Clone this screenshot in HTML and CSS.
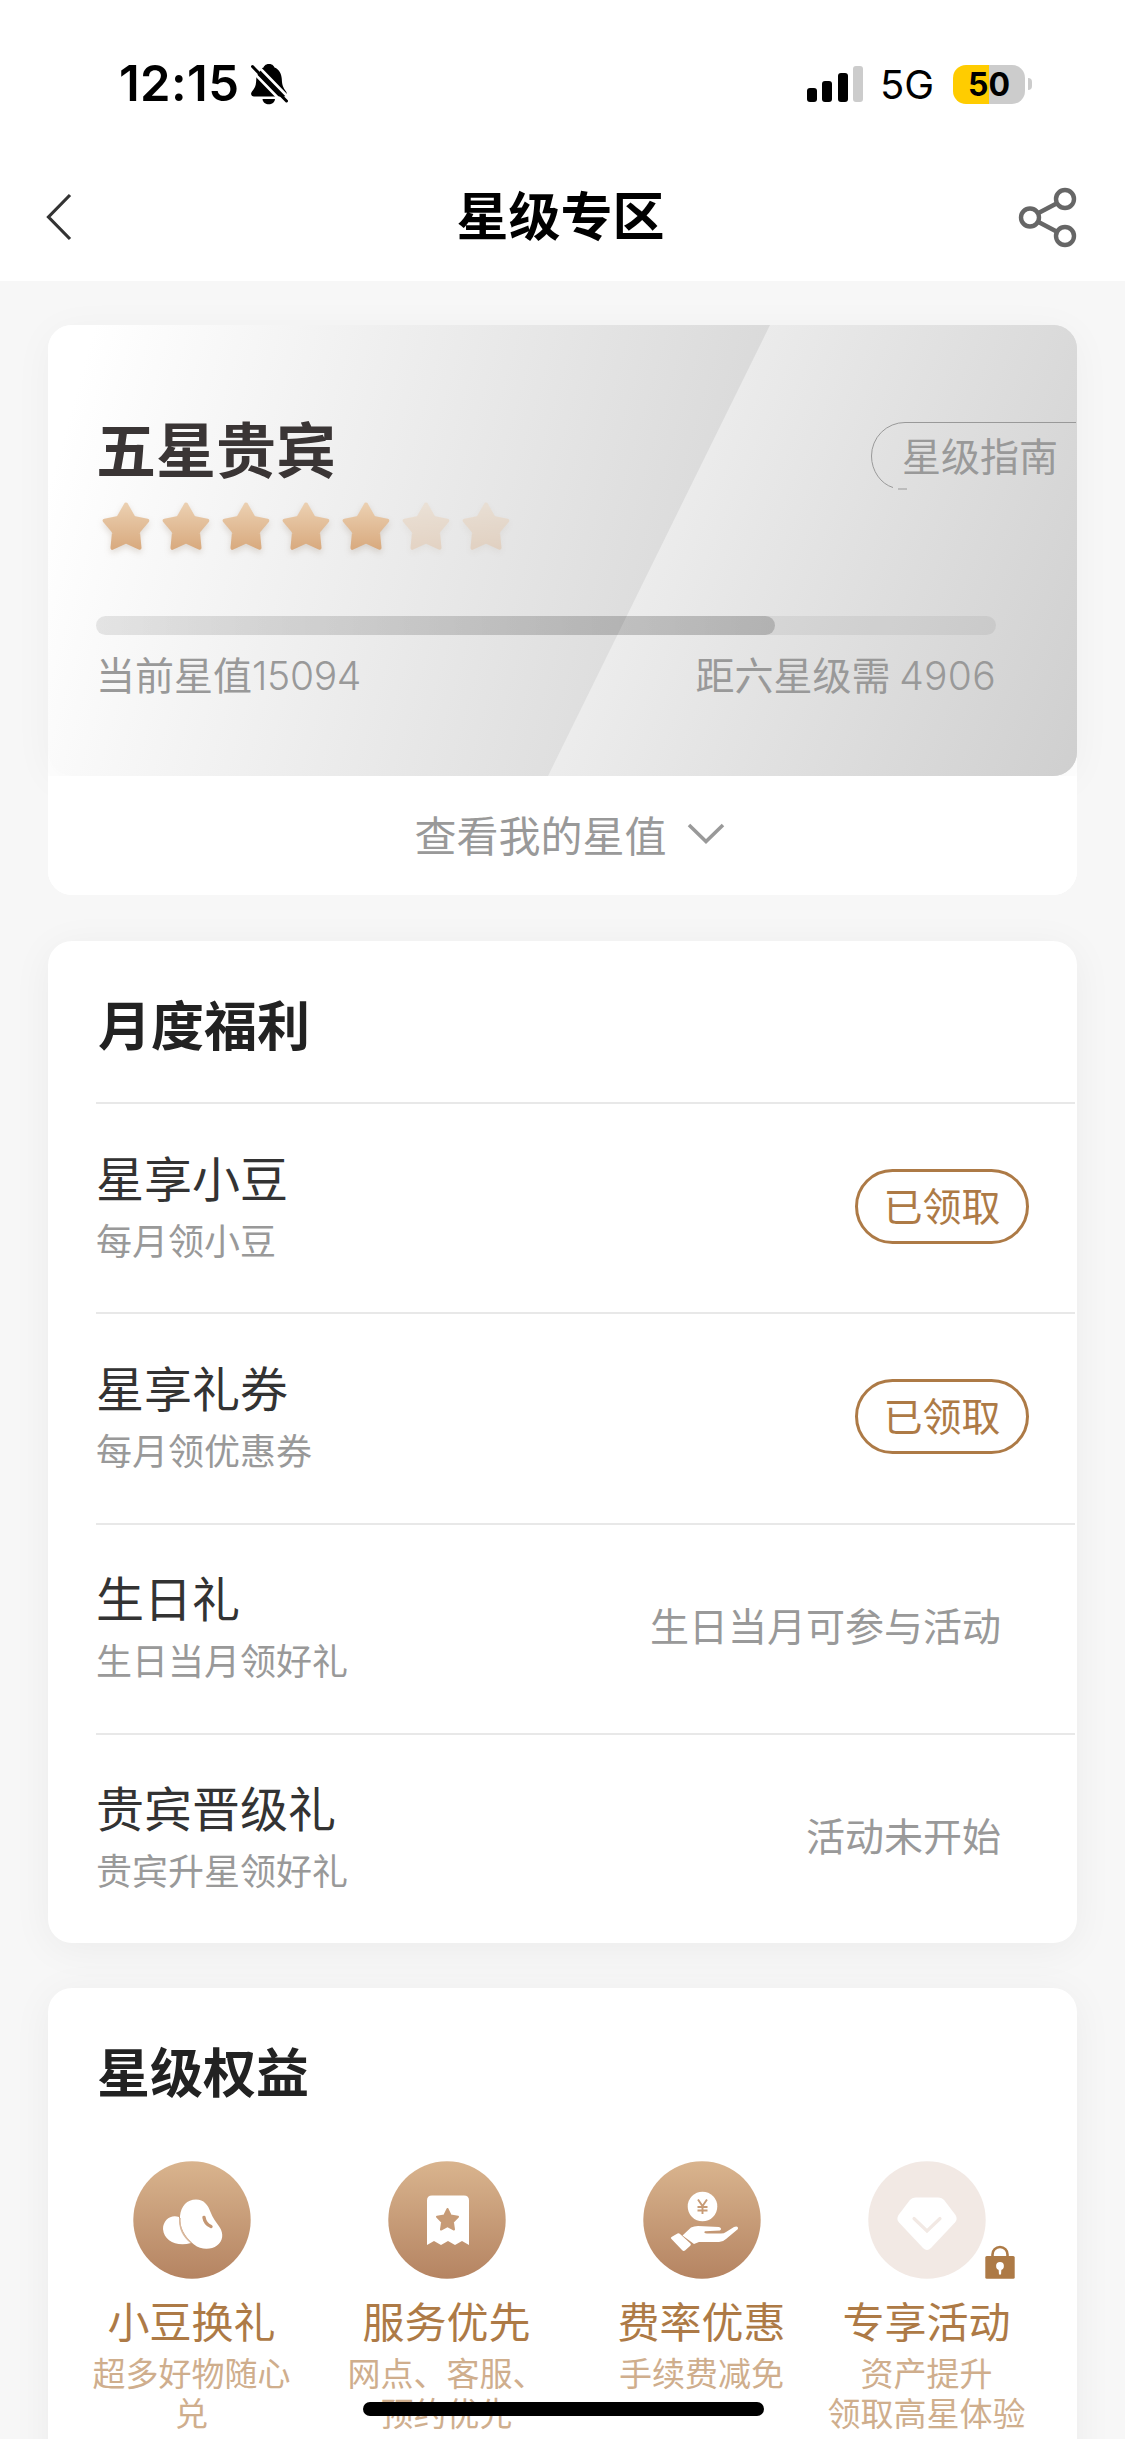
FILE: index.html
```html
<!DOCTYPE html>
<html lang="zh-CN">
<head>
<meta charset="utf-8">
<title>星级专区</title>
<link rel="stylesheet" href="styles.css">
</head>
<body>
<svg class="defs" width="0" height="0" aria-hidden="true">
  <defs>
    <linearGradient id="starFill" x1="0" y1="0" x2="0" y2="1">
      <stop offset="0" stop-color="#ebcfb0"/><stop offset="1" stop-color="#d9ab80"/>
    </linearGradient>
    <linearGradient id="discFill" x1="0" y1="0" x2="0" y2="1">
      <stop offset="0" stop-color="#d9b48e"/><stop offset="1" stop-color="#b58462"/>
    </linearGradient>
    <symbol id="star" viewBox="0 0 60 60">
      <path d="M30 8.5 36.8 20.5Q37.500 21.800 39 22.100L51.300 24.600 43 34.500Q42 35.700 42.100 37.200L43.500 51.800 31.500 46.200Q30 45.500 28.500 46.200L16.500 51.800 17.900 37.200Q18 35.700 17 34.500L8.700 24.600 21 22.100Q22.500 21.800 23.200 20.500Z" fill="url(#starFill)" stroke="url(#starFill)" stroke-width="4" stroke-linejoin="round"/>
    </symbol>
  </defs>
</svg>

<div class="screen">
  <div class="status">
    <div class="status-left">
      <span class="clock">12:15</span>
      <svg class="bell" width="38" height="42" viewBox="0 0 38 42">
        <path d="M19 1C23 1 24 3.500 24.500 4.500C29.500 6.500 31.500 11 31.800 16C32 22 33 24.500 36 28.500C38 31.500 36 33.500 34 33.500H4C1.500 33.500 0 31 2 28.500C5.500 24.500 6 22 6.300 16C6.500 11 8.500 6.500 13.500 4.500C14 3.500 15 1 19 1Z"/>
        <path d="M12.500 36H25C24.500 43 13 43 12.500 36Z"/>
        <path d="M-1 5 33 40M5 0 39 35" stroke="#fff" stroke-width="2.600" fill="none"/>
        <path d="M0 0H4L11 7 5 15 -1 9Z" fill="#fff"/>
        <path d="M2.500 3.500 36.500 38" stroke="#000" stroke-width="3" stroke-linecap="round"/>
      </svg>
    </div>
    <div class="status-right">
      <div class="signal"><i class="b1"></i><i class="b2"></i><i class="b3"></i><i class="b4"></i></div>
      <span class="net">5G</span>
      <div class="battery">50</div>
      <i class="battery-tip"></i>
    </div>
  </div>

  <header class="nav">
    <svg width="28" height="48" viewBox="0 0 28 48"><path d="M25 2 3.500 24 25 46" fill="none" stroke="#333" stroke-width="3.200"/></svg>
    <h1>星级专区</h1>
    <svg width="60" height="60" viewBox="0 0 60 60" fill="none" stroke="#666" stroke-width="4.400">
      <circle cx="13" cy="30.500" r="9"/><circle cx="48" cy="12" r="9"/><circle cx="48" cy="49" r="9"/>
      <path d="M21 26.300 40 16.200M21 34.700 40 44.800"/>
    </svg>
  </header>

  <main>
    <section class="card level">
      <div class="hero">
        <div class="hero-top">
          <div>
            <h2>五星贵宾</h2>
            <div class="stars">
              <svg><use href="#star"/></svg><svg><use href="#star"/></svg><svg><use href="#star"/></svg><svg><use href="#star"/></svg><svg><use href="#star"/></svg><svg class="off"><use href="#star"/></svg><svg class="off"><use href="#star"/></svg>
            </div>
          </div>
          <a class="guide">
            <svg width="205" height="68" viewBox="0 0 205 68" fill="none" stroke="#999"><path d="M205 .5H34A33.500 33.500 0 0 0 .5 34C.5 49 10 62 22 65.500M27 67H36"/></svg>
            <span>星级指南</span>
          </a>
        </div>
        <div class="bar"><div class="bar-fill" style="width:75.470%"></div></div>
        <div class="values"><span>当前星值<b>15094</b></span><span class="next">距六星级需 <b>4906</b></span></div>
      </div>
      <a class="more">查看我的星值
        <svg width="38" height="24" viewBox="0 0 38 24"><path d="M2 3 19 19.500 36 3" fill="none" stroke="#999" stroke-width="3.600"/></svg>
      </a>
    </section>

    <section class="card">
      <h3>月度福利</h3>
      <ul class="rows">
        <li><div><strong>星享小豆</strong><small>每月领小豆</small></div><span class="pill">已领取</span></li>
        <li><div><strong>星享礼券</strong><small>每月领优惠券</small></div><span class="pill">已领取</span></li>
        <li><div><strong>生日礼</strong><small>生日当月领好礼</small></div><em>生日当月可参与活动</em></li>
        <li><div><strong>贵宾晋级礼</strong><small>贵宾升星领好礼</small></div><em>活动未开始</em></li>
      </ul>
    </section>

    <section class="card rights">
      <h3>星级权益</h3>
      <div class="grid">
        <div class="item">
          <svg class="disc" viewBox="0 0 118 118"><circle cx="59" cy="59" r="58.700" fill="url(#discFill)"/>
            <path d="M46 56C38 53 30 59 30 68C31 80 44 86 58 82C50 75 46 66 46 56Z" fill="#fff"/>
            <path d="M63 38.500C71 38.500 75 44 77.500 51C79.500 57 83 60.500 86.500 66C91 73 90 80 84 84.500C78 89 68 89 61 83.500C52 76.500 46 66 47 55C48 45 54 38.500 63 38.500Z" fill="#fff"/>
            <path d="M47 57C46 67 51 76 58.500 82" fill="none" stroke="#d9b89d" stroke-width="1.500"/>
            <path d="M71 56.500Q72 63 78 65.500" fill="none" stroke="#c49672" stroke-width="3.400" stroke-linecap="round"/></svg>
          <p>小豆换礼</p><small>超多好物随心兑</small>
        </div>
        <div class="item">
          <svg class="disc" viewBox="0 0 118 118"><circle cx="59" cy="59" r="58.700" fill="url(#discFill)"/>
            <path d="M43 34.500H76Q81 34.500 81 39.500V84L74 80 67 84 60 80 53 84 46 80 39 84V39.500Q39 34.500 44 34.500Z" fill="#fff"/>
            <path d="M59.500 48 62.800 54.600 70 55.800 64.900 61 66 68.500 59.500 65.200 53 68.500 54.100 61 49 55.800 56.200 54.600Z" fill="#c79b76" stroke="#c79b76" stroke-width="2" stroke-linejoin="round"/></svg>
          <p>服务优先</p><small>网点、客服、<br>预约优先</small>
        </div>
        <div class="item">
          <svg class="disc" viewBox="0 0 118 118"><circle cx="59" cy="59" r="58.700" fill="url(#discFill)"/>
            <circle cx="59.500" cy="45.500" r="14.800" fill="#fff"/>
            <path d="M55 38.500 59.500 45 64 38.500M59.500 45V53M54.500 46H64.500M54.500 49.500H64.500" fill="none" stroke="#c79b76" stroke-width="1.900"/>
            <path d="M39.500 74.500 48 66.500Q51 65 55 65L76 66Q79.500 67.500 77 69.500L62 70.300Q60 72 64 72.500H78Q81 72.500 83 71L91 66Q95.500 64.500 95 68L83 78Q80 81 76 81H56L51 83Z" fill="#fff"/>
            <path d="M28.500 78Q27 77 28.500 76L34.500 72.500Q36 72 37 73L47.500 82.500Q48.500 84 47 85L42 89.500Q40.500 90.500 39 89Z" fill="#fff"/></svg>
          <p>费率优惠</p><small>手续费减免</small>
        </div>
        <div class="item">
          <svg class="disc" viewBox="0 0 118 118"><circle cx="59" cy="59" r="58.700" fill="#f2e9e4"/>
            <path d="M48 36.500H70Q74 36.500 76.500 39.500L87.500 54Q90 58 87 61.500L63 87Q59 91 55 87L31 61.500Q28 58 30.500 54L41.500 39.500Q44 36.500 48 36.500Z" fill="#fff"/>
            <path d="M46 57.500 59 70 72 57.500" fill="none" stroke="#f2e9e4" stroke-width="3.200" stroke-linecap="round"/></svg>
          <svg class="lock" viewBox="0 0 30 34"><path d="M7.500 12V9.500A7.500 7.500 0 0 1 22.500 9.500V12" fill="none" stroke="#ad7a46" stroke-width="2.600"/><rect x=".3" y="11" width="29.400" height="22.800" rx="1.500" fill="#ad7a46"/><circle cx="15" cy="21" r="3.900" fill="#fff"/><path d="M13.500 23H16.500L16 29.500H14Z" fill="#fff"/></svg>
          <p>专享活动</p><small>资产提升<br>领取高星体验</small>
        </div>
      </div>
    </section>
  </main>
  <div class="home-indicator"></div>
</div>
</body>
</html>
```
FILE: styles.css
```css
* { box-sizing: border-box; margin: 0; padding: 0; }

body {
  background: #f7f7f7;
  color: #333;
  font-family: "Noto Sans CJK SC", "Noto Sans", sans-serif;
}

svg { display: block; flex: none; overflow: visible; }
.defs { position: absolute; }
em, i { font-style: normal; }

.screen {
  position: relative;
  width: 1125px;
  height: 2439px;
  overflow: hidden;
}

/* Status bar */
.status {
  display: flex;
  justify-content: space-between;
  height: 168px;
  padding: 0 93px 0 119px;
  background: #fff;
  color: #000;
  font-family: Inter, sans-serif;
}
.status-left, .status-right { display: flex; align-items: center; height: 168px; }
.clock { width: 130px; font-size: 49px; font-weight: 600; letter-spacing: .4px; line-height: 60px; }
.bell { margin-left: 1px; }
.signal { display: flex; align-items: flex-end; gap: 5.500px; height: 36px; width: 56px; }
.signal i { width: 10px; border-radius: 3px; background: #000; }
.signal .b1 { height: 14px; }
.signal .b2 { height: 21px; }
.signal .b3 { height: 29px; }
.signal .b4 { height: 36px; background: #ccc; }
.net { width: 71px; margin-left: 17px; font-size: 40px; line-height: 60px; margin-top: 2px; }
.battery {
  width: 72px;
  height: 39px;
  margin-left: 2px;
  border-radius: 13px;
  background: linear-gradient(90deg, #fc0 50%, #ccc 50%);
  font-size: 32px;
  font-weight: 700;
  line-height: 39px;
  text-align: center;
}
.battery-tip { width: 4px; height: 12px; margin-left: 3px; border-radius: 0 5px 5px 0; background: #ccc; }

/* Navigation bar */
.nav {
  display: flex;
  align-items: center;
  justify-content: space-between;
  height: 113px;
  padding: 0 48px 16px 45px;
  background: #fff;
}
.nav svg:first-child { margin-right: 32px; }
.nav h1 { margin: -6px 0 0 -1px; color: #000; font-size: 52px; font-weight: 700; line-height: 76px; }

main { display: flex; flex-direction: column; gap: 46px; padding: 44px 48px; }

.card {
  border-radius: 24px;
  background: #fff;
  box-shadow: 0 6px 40px rgba(0, 0, 0, .05);
}
.level { height: 570px; box-shadow: none; }

.hero {
  position: relative;
  height: 451px;
  padding: 84px 0 0 48px;
  border-radius: 24px;
  overflow: hidden;
  background: linear-gradient(106deg, #fff 4%, #d8d8d8 66%);
  box-shadow: 0 6px 40px rgba(0, 0, 0, .04);
}
.hero::before {
  content: "";
  position: absolute;
  inset: 0;
  background: linear-gradient(113deg, #efefef 53%, #cfcfcf 100%);
  clip-path: polygon(722px 0, 100% 0, 100% 100%, 500px 100%);
}
.hero > * { position: relative; }
.hero-top { display: flex; justify-content: space-between; height: 207px; }
.hero h2 { color: #3a3535; font-size: 60px; font-weight: 700; line-height: 76px; }
.stars { display: flex; margin-top: 11px; }
.stars svg { width: 60px; height: 60px; filter: drop-shadow(0 3px 3px rgba(120, 90, 60, .2)); }
.stars .off { opacity: .35; }

.guide { position: relative; width: 206px; height: 68px; margin-top: 13px; color: #999; font-size: 39px; line-height: 64px; }
.guide svg { position: absolute; left: 0; top: 0; }
.guide span { padding-left: 31px; }

.bar { width: 900px; height: 19px; border-radius: 10px; background: rgba(0, 0, 0, .06); }
.bar-fill { height: 100%; border-radius: 10px; background: linear-gradient(90deg, rgba(0, 0, 0, .03), rgba(0, 0, 0, .17)); }
.values { display: flex; justify-content: space-between; width: 900px; margin-top: 10px; color: #999; font-size: 39px; line-height: 56px; }
.values b { font-family: Inter, sans-serif; font-weight: 300; letter-spacing: -.3px; }
.values .next b { letter-spacing: .3px; }

.more {
  position: relative;
  display: flex;
  align-items: center;
  justify-content: center;
  gap: 20px;
  height: 119px;
  padding: 0 0 4px 14px;
  border-radius: 0 0 24px 24px;
  background: #fff;
  color: #999;
  font-size: 42px;
}

.card h3 { height: 161px; padding-left: 50px; color: #222; font-size: 53px; font-weight: 700; line-height: 164px; }

.rows { list-style: none; }
.rows li {
  display: flex;
  align-items: center;
  justify-content: space-between;
  height: 210.250px;
  margin: 0 2px 0 48px;
  padding: 0 74px 0 0;
  border-top: 2px solid #e8e8e8;
}
.rows li > div { margin-top: -10px; }
.rows li > .pill { margin: -3px -28px 0 0; }
.rows strong { display: block; font-size: 48px; font-weight: 400; line-height: 70px; }
.rows small { display: block; margin-top: 1px; color: #999; font-size: 36px; line-height: 54px; }
.rows em { margin-top: -9px; color: #999; font-size: 39px; line-height: 60px; }
.pill {
  width: 174px;
  height: 75px;
  border: 3px solid #ad7a46;
  border-radius: 38px;
  color: #ad7a46;
  font-size: 39px;
  line-height: 65px;
  text-align: center;
}

.rights { height: 520px; margin-top: -1px; }
.rights h3 { padding-left: 49px; }
.grid { display: grid; grid-template-columns: 255px 255px 255px 195px; padding-left: 16px; margin-top: 12px; }
.item { position: relative; display: flex; flex-direction: column; align-items: center; text-align: center; color: #ad7a46; }
.disc { width: 118px; height: 118px; }
.lock { position: absolute; left: 156px; top: 84px; width: 30px; height: 34px; }
.item p { margin-top: 11px; font-size: 42px; line-height: 60px; white-space: nowrap; }
.item small { width: 200px; margin-top: 2px; color: #cfae8d; font-size: 33px; line-height: 40px; }

.home-indicator { position: absolute; left: 363px; top: 2402px; width: 401px; height: 14px; border-radius: 7px; background: #000; }
```
